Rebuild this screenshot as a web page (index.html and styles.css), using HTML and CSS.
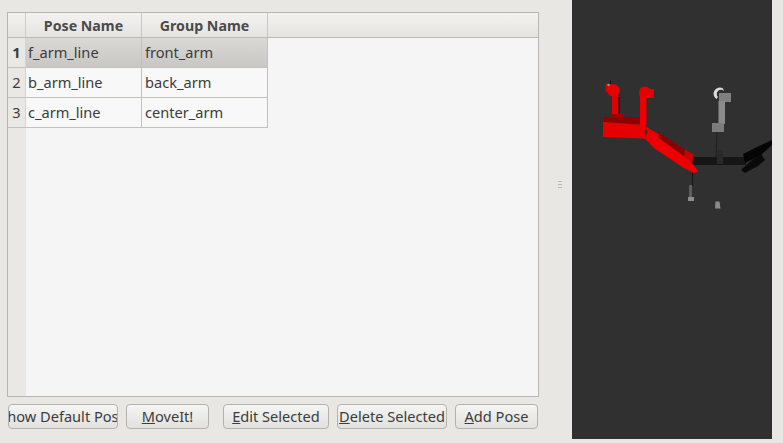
FILE: index.html
```html
<!DOCTYPE html>
<html lang="en">
<head>
  <meta charset="UTF-8" />
  <title>Poses</title>
  <link rel="stylesheet" href="styles.css">
</head>

<body>
  <div class="left-pane">
    <div class="table-frame">
      <div class="table-head">
        <div class="corner"></div>
        <div class="head-cell col-pose">Pose Name</div>
        <div class="head-cell col-group">Group Name</div>
      </div>
      <div class="table-body">
        <div class="row-numbers">
          <div class="row-num current">1</div>
          <div class="row-num">2</div>
          <div class="row-num">3</div>
        </div>
        <div class="rows">
          <div class="row selected">
            <div class="cell col-pose">f_arm_line</div>
            <div class="cell col-group">front_arm</div>
          </div>
          <div class="row">
            <div class="cell col-pose">b_arm_line</div>
            <div class="cell col-group">back_arm</div>
          </div>
          <div class="row">
            <div class="cell col-pose">c_arm_line</div>
            <div class="cell col-group">center_arm</div>
          </div>
        </div>
      </div>
    </div>

    <div class="button-row">
      <button class="btn btn-show"><span class="clip-text">Show Default Pose</span></button>
      <button class="btn btn-moveit"><u>M</u>oveIt!</button>
      <button class="btn btn-edit"><u>E</u>dit Selected</button>
      <button class="btn btn-delete"><u>D</u>elete Selected</button>
      <button class="btn btn-add"><u>A</u>dd Pose</button>
    </div>
  </div>

  <div class="splitter">
    <span></span><span></span><span></span>
  </div>

  <div class="viewport">
    <svg class="scene" viewBox="572 0 200 439" aria-hidden="true">
      <!-- thin links -->
      <path d="M717 131L716 158" stroke="#1e1e1e" stroke-width="1" fill="none"/>
      <path d="M692.5 171V186" stroke="#151515" stroke-width="1" fill="none"/>

      <!-- black arm -->
      <rect x="692" y="157" width="54" height="8" fill="#161616"/>
      <rect x="717" y="150" width="6" height="14" fill="#2a2a2a"/>
      <path d="M743 154L755 148L772 140V145L761 155L745 163Z" fill="#050505"/>
      <path d="M741 170L752 160L761 154L765 160L758 166L745 173Z" fill="#0a0a0a"/>

      <!-- grey arm -->
      <path d="M723 88.5A6 6 0 0 0 716.5 99L718 97A3.5 3.5 0 0 1 724 91Z" fill="#dcdcdc"/>
      <rect x="719" y="93" width="12" height="9" fill="#808080"/>
      <rect x="718.5" y="101" width="6.5" height="23" fill="#8b8b8b"/>
      <rect x="712" y="123" width="12" height="9" fill="#7c7c7c"/>

      <!-- small grey parts -->
      <rect x="689" y="185" width="3" height="12" fill="#5e5e5e"/>
      <rect x="688" y="197" width="6" height="4" fill="#8c8c8c"/>
      <path d="M715.5 201.5H719.5L720.5 208.5H715Z" fill="#8a8a8a"/>

      <!-- red arm -->
      <path d="M604 117H640L645 125L604 122Z" fill="#8e0000"/>
      <rect x="612" y="95" width="6.5" height="22" fill="#e00000"/>
      <rect x="618" y="97" width="2" height="18" fill="#6a0000"/>
      <rect x="612" y="114" width="11.5" height="4" fill="#a00000"/>
      <rect x="605.5" y="84" width="7" height="8" fill="#d80000"/>
      <circle cx="613.5" cy="90.5" r="6.2" fill="#e80000"/>
      <circle cx="608.5" cy="85" r="1.2" fill="#999999"/>
      <path d="M610.5 80.5V84" stroke="#111111" stroke-width="1"/>
      <rect x="640" y="96" width="6.5" height="29" fill="#ef0000"/>
      <rect x="645" y="89" width="9" height="9" fill="#d80000"/>
      <circle cx="645" cy="92.5" r="6" fill="#e80000"/>
      <path d="M603 122L645 125V138.5L603 137Z" fill="#e60000"/>
      <path d="M658 132L685 149.5L684 157L658 138.5Z" fill="#8a0000"/>
      <path d="M685 149.5L693.5 154.5L692.5 163L684 157Z" fill="#cc0000"/>
      <path d="M645 126L659 134.5L657 139L648 133Z" fill="#e80000"/>
      <path d="M648 131.5L658.5 138L683.5 156L692 163L698.5 171.5L693.5 173L683 167.5L654 148L645 138.5Z" fill="#ee0000"/>
    </svg>
  </div>
</body>
</html>
```

FILE: styles.css
```css
body {
  font-family: 'Noto Sans', sans-serif;
  background-color: #e8e7e4;
  margin: 0;
  width: 783px;
  height: 443px;
  overflow: hidden;
  display: flex;
  font-size: 14.6px;
  color: #3c3c3c;
}

.left-pane {
  width: 532px;
  margin-left: 7px;
  padding-top: 12px;
  display: flex;
  flex-direction: column;
  box-sizing: border-box;
  height: 443px;
}

.table-frame {
  height: 385px;
  box-sizing: border-box;
  border: 1px solid #b9b6b1;
  background-color: #f5f5f5;
  display: flex;
  flex-direction: column;
}

.table-head {
  display: flex;
  height: 25px;
  box-sizing: border-box;
  background: linear-gradient(#f3f2f0, #e5e4e1);
  border-bottom: 1px solid #bcb9b4;
}

.corner {
  width: 18px;
  box-sizing: border-box;
  border-right: 1px solid #cfccc8;
}

.head-cell {
  font-weight: 700;
  font-size: 14.2px;
  line-height: 25px;
  text-align: center;
  box-sizing: border-box;
  border-right: 1px solid #c9c6c2;
  color: #4a4a4a;
}

.col-pose {
  width: 116px;
}

.col-group {
  width: 126px;
}

.table-body {
  flex: 1;
  display: flex;
}

.row-numbers {
  width: 18px;
  background-color: #e9e8e5;
}

.row-num {
  height: 30px;
  line-height: 29px;
  text-align: center;
  box-sizing: border-box;
  border-bottom: 1px solid #c4c1bd;
  border-right: 1px solid #d6d3cf;
}

.row-num.current {
  font-weight: 700;
}

.row {
  display: flex;
  height: 30px;
  box-sizing: border-box;
  border-bottom: 1px solid #c4c1bd;
  background-color: #f8f8f8;
}

.row.selected {
  background: linear-gradient(#dbd9d6, #c9c7c3);
}

.cell {
  line-height: 29px;
  padding-left: 3px;
  box-sizing: border-box;
  border-right: 1px solid #c4c1bd;
  white-space: nowrap;
}

.cell.col-pose {
  padding-left: 2px;
}

.button-row {
  display: flex;
  margin-top: 7px;
  padding-left: 1px;
}

.btn {
  height: 25px;
  padding: 0 0 2px;
  border: 1px solid #b5b2ad;
  border-radius: 4px;
  background: linear-gradient(#f5f5f3, #e2e1de);
  font-family: inherit;
  font-size: 14.6px;
  color: #3c3c3c;
  white-space: nowrap;
  overflow: hidden;
  display: flex;
  justify-content: center;
  align-items: center;
}

.btn-show {
  width: 110px;
  margin-right: 8px;
}

.clip-text {
  flex: none;
}

.btn-moveit {
  width: 83px;
  margin-right: 14px;
}

.btn-edit {
  width: 106px;
  margin-right: 8px;
}

.btn-delete {
  width: 110px;
  margin-right: 8px;
}

.btn-add {
  width: 83px;
}

.splitter {
  width: 33px;
  box-sizing: border-box;
  padding-left: 8px;
  display: flex;
  flex-direction: column;
  align-items: center;
  justify-content: center;
  gap: 2px;
  height: 368px;
}

.splitter span {
  width: 4px;
  height: 1px;
  background-color: #bdbbb7;
}

.viewport {
  width: 200px;
  height: 439px;
  background-color: #303030;
}

.scene {
  display: block;
  width: 200px;
  height: 439px;
}
```
